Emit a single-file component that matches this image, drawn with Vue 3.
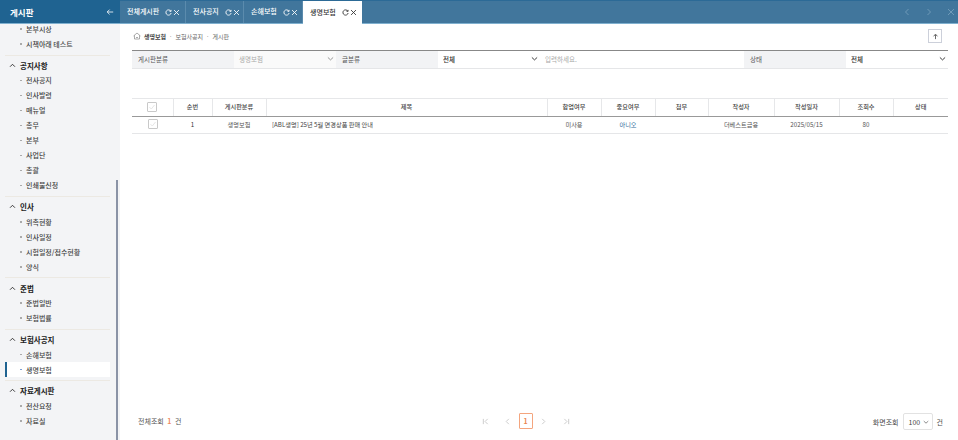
<script setup>
const menuGroups = [
  { title: '', items: ['본부시상', '시책아래 테스트'] },
  { title: '공지사항', items: ['전사공지', '인사발령', '매뉴얼', '총무', '본부', '사업단', '총괄', '인쇄물신청'] },
  { title: '인사', items: ['위촉현황', '인사일정', '시험일정/접수현황', '양식'] },
  { title: '준법', items: ['준법일반', '보험법률'] },
  { title: '보험사공지', items: ['손해보험', '생명보험'] },
  { title: '자료게시판', items: ['전산요청', '자료실'] }
]

const tabs = [
  { name: '전체게시판', width: 66 },
  { name: '전사공지', width: 58 },
  { name: '손해보험', width: 59 },
  { name: '생명보험', width: 59, active: true }
]

const columns = [
  { label: '', width: 41 },
  { label: '순번', width: 39 },
  { label: '게시판분류', width: 54 },
  { label: '제목', width: 281 },
  { label: '합업여부', width: 54 },
  { label: '중요여부', width: 54 },
  { label: '첨부', width: 53 },
  { label: '작성자', width: 66 },
  { label: '작성일자', width: 65 },
  { label: '조회수', width: 54 },
  { label: '상태', width: 55 }
]
</script>

<template>
  <div class="page">
    <header class="topbar">
      <div class="brand">
        <span class="brand-title">게시판</span>
        <svg class="brand-arrow" viewBox="0 0 10 10">
          <path d="M9 5H1.5M4.5 2 1.5 5l3 3" />
        </svg>
      </div>
      <div class="tabs">
        <div v-for="tab in tabs" :key="tab.name" class="tab" :class="{ 'is-active': tab.active }"
          :style="{ width: tab.width + 'px' }">
          <span class="tab-name">{{ tab.name }}</span>
          <svg class="tab-icon" viewBox="0 0 8 8">
            <path d="M6.6 2.4A3 3 0 1 0 7 4.6M6.9 1v1.7H5.2" />
          </svg>
          <svg class="tab-icon" viewBox="0 0 8 8">
            <path d="M1.2 1.2l5.6 5.6M6.8 1.2 1.2 6.8" />
          </svg>
        </div>
      </div>
      <div class="tab-nav">
        <svg viewBox="0 0 8 8"><path d="M5.5 1 2.5 4l3 3" /></svg>
        <svg viewBox="0 0 8 8"><path d="M2.5 1l3 3-3 3" /></svg>
        <svg viewBox="0 0 8 8"><path d="M1 1l6 6M7 1 1 7" /></svg>
      </div>
    </header>

    <div class="body">
      <aside class="sidebar">
        <nav class="menu">
          <section v-for="group in menuGroups" :key="group.title" class="menu-group">
            <div v-if="group.title" class="menu-title">
              <svg viewBox="0 0 8 8"><path d="M1.2 5.4 4 2.6l2.8 2.8" /></svg>
              {{ group.title }}
            </div>
            <div v-for="item in group.items" :key="item" class="menu-item" :class="{ 'is-active': item === '생명보험' }">
              <span class="bullet"></span>{{ item }}
            </div>
          </section>
        </nav>
        <div class="scroll-thumb"></div>
      </aside>

      <main class="content">
        <div class="crumb-row">
          <div class="crumbs">
            <svg class="home" viewBox="0 0 8 8"><path d="M.5 4 4 1l3.500 3M1.500 3.300V7h5V3.300M3 5.500h2" /></svg>
            <strong>생명보험</strong>
            <span class="dot">·</span><span>보험사공지</span>
            <span class="dot">·</span><span>게시판</span>
          </div>
          <button class="up-btn">
            <svg viewBox="0 0 8 8"><path d="M4 7V2M1.800 3.800 4 1.300l2.200 2.500" /></svg>
          </button>
        </div>

        <div class="filter">
          <div class="f-label">게시판분류</div>
          <div class="f-field is-muted">생명보험
            <svg viewBox="0 0 8 8"><path d="M1 2.800 4 5.600l3-2.800" /></svg>
          </div>
          <div class="f-label">글분류</div>
          <div class="f-field">전체
            <svg class="dark" viewBox="0 0 8 8"><path d="M1 2.800 4 5.600l3-2.800" /></svg>
          </div>
          <div class="f-input">입력하세요.</div>
          <div class="f-label">상태</div>
          <div class="f-field">전체
            <svg class="dark" viewBox="0 0 8 8"><path d="M1 2.800 4 5.600l3-2.800" /></svg>
          </div>
        </div>

        <table class="grid">
          <colgroup>
            <col v-for="col in columns" :key="col.label" :style="{ width: col.width + 'px' }">
          </colgroup>
          <thead>
            <tr>
              <th v-for="col in columns" :key="col.label">
                <span v-if="!col.label" class="check">
                  <svg viewBox="0 0 8 8"><path d="M1.500 4.200 3.300 6l3.200-4" /></svg>
                </span>
                {{ col.label }}
              </th>
            </tr>
          </thead>
          <tbody>
            <tr>
              <td>
                <span class="check">
                  <svg viewBox="0 0 8 8"><path d="M1.500 4.200 3.300 6l3.200-4" /></svg>
                </span>
              </td>
              <td class="dark-text">1</td>
              <td>생명보험</td>
              <td class="subject">[ABL생명] 25년 5월 면경상품 판매 안내</td>
              <td>미사용</td>
              <td class="blue">아니오</td>
              <td></td>
              <td>더베스트금융</td>
              <td>2025/05/15</td>
              <td>80</td>
              <td></td>
            </tr>
          </tbody>
        </table>

        <footer class="footer">
          <div class="total">전체조회<b>1</b>건</div>
          <div class="pager">
            <svg viewBox="0 0 8 8"><path d="M1.500 1v6M6.500 1 3.500 4l3 3" /></svg>
            <svg class="gap-lg" viewBox="0 0 8 8"><path d="M5.500 1 2.500 4l3 3" /></svg>
            <span class="page-num">1</span>
            <svg viewBox="0 0 8 8"><path d="M2.500 1l3 3-3 3" /></svg>
            <svg class="gap-lg" viewBox="0 0 8 8"><path d="M1.500 1l3 3-3 3M6.500 1v6" /></svg>
          </div>
          <div class="page-size">
            <span>화면조회</span>
            <div class="size-select">100
              <svg viewBox="0 0 8 8"><path d="M1 2.800 4 5.600l3-2.800" /></svg>
            </div>
            <span>건</span>
          </div>
        </footer>
      </main>
    </div>
  </div>
</template>

<style scoped>
.page {
  width: 958px;
  height: 440px;
  display: flex;
  flex-direction: column;
  overflow: hidden;
  background: #fff;
  color: #4a4a4a;
  font-family: "Noto Sans CJK KR", "Noto Sans", sans-serif;
  font-size: 7px;
}

svg {
  fill: none;
  stroke: currentColor;
  stroke-width: 1;
  flex: none;
}

.topbar {
  height: 24px;
  display: flex;
  flex: none;
  background: #41769c;
  border-top: 1px solid #2c6a96;
  border-bottom: 1px solid #7fb0cf;
  box-sizing: border-box;
}

.brand {
  width: 120px;
  margin: -1px 0;
  padding: 0 6px 0 10px;
  box-sizing: border-box;
  display: flex;
  align-items: center;
  justify-content: space-between;
  background: #1f6391;
  border-bottom: 1px solid #7fb0cf;
  color: #fff;
}

.brand-title {
  font-size: 8.500px;
  font-weight: 700;
}

.brand-arrow {
  width: 8px;
  height: 8px;
}

.tabs {
  display: flex;
  flex: 1;
}

.tab {
  display: flex;
  align-items: center;
  box-sizing: border-box;
  padding-left: 7px;
  color: #fff;
  font-weight: 500;
  border-right: 1px solid #5b8bad;
}

.tab.is-active {
  background: #fff;
  color: #333;
  margin-bottom: -1px;
  border-right: 0;
}

.tab-name {
  margin-right: 6px;
  margin-bottom: 2px;
  white-space: nowrap;
}

.tab-icon {
  width: 7px;
  height: 7px;
  margin-right: 1px;
}

.tab-nav {
  display: flex;
  align-items: center;
  gap: 14px;
  padding-right: 3px;
  color: #6f9ab8;
}

.tab-nav svg {
  width: 8px;
  height: 8px;
}

.body {
  flex: 1;
  display: flex;
  min-height: 0;
}

.sidebar {
  width: 120px;
  flex: none;
  position: relative;
  overflow: hidden;
  background: #f3f4f6;
}

.menu {
  margin-top: -2.500px;
  padding: 0 10px 0 5px;
}

.menu-group {
  padding-bottom: 3px;
  margin-bottom: 2.400px;
  border-bottom: 1px solid #ece9e3;
}

.menu-group:last-child {
  border-bottom: 0;
}

.menu-title {
  height: 15px;
  display: flex;
  align-items: center;
  gap: 4px;
  padding-left: 4px;
  font-size: 7.500px;
  font-weight: 700;
  color: #222;
}

.menu-title svg {
  width: 7px;
  height: 7px;
}

.menu-item {
  height: 15px;
  display: flex;
  align-items: center;
  padding-left: 15px;
  color: #444;
  font-weight: 500;
  white-space: nowrap;
}

.menu-item.is-active {
  padding-left: 13px;
  background: #fff;
  border-left: 2px solid #1f6391;
}

.bullet {
  width: 2px;
  height: 1.500px;
  margin-right: 4px;
  background: #aaa;
}

.is-active .bullet {
  background: #7a9fd6;
}

.scroll-thumb {
  position: absolute;
  left: 116px;
  top: 156px;
  bottom: 0;
  width: 2px;
  background: #8a93a6;
}

.content {
  flex: 1;
  min-width: 0;
  display: flex;
  flex-direction: column;
  padding: 0 10px 0 12px;
}

.crumb-row {
  height: 26px;
  display: flex;
  align-items: center;
  justify-content: space-between;
  padding: 0 6px 0 1px;
}

.crumbs {
  display: flex;
  align-items: center;
  gap: 2px;
  margin-bottom: 2px;
  color: #666;
  font-size: 6px;
}

.crumbs strong {
  margin-left: 1px;
  color: #444;
  font-size: 6px;
  font-weight: 700;
}

.dot {
  margin: 0 1px;
}

.home {
  width: 8px;
  height: 8px;
  color: #888;
  stroke-width: .7;
}

.up-btn {
  width: 14px;
  height: 14px;
  margin-bottom: 2px;
  padding: 0;
  display: flex;
  align-items: center;
  justify-content: center;
  background: #fff;
  border: 1px solid #ccd0da;
  color: #555;
}

.up-btn svg {
  width: 7px;
  height: 7px;
}

.filter {
  display: grid;
  grid-template-columns: 102px 102px 102px 102px 204px 102px 102px;
  height: 19px;
  box-sizing: border-box;
  border-top: 1px solid #888;
  border-bottom: 1px solid #e5e6e8;
  font-size: 6.500px;
}

.filter > div {
  padding-bottom: 2px;
}

.f-label {
  display: flex;
  align-items: center;
  padding-left: 6px;
  background: #f2f3f5;
  color: #555;
}

.f-field {
  display: flex;
  align-items: center;
  justify-content: space-between;
  padding: 0 2px 0 5px;
  color: #333;
  font-weight: 500;
}

.f-field.is-muted {
  color: #aaa;
  font-weight: 400;
  padding-left: 5px;
  background: #fafafa;
}

.f-field svg {
  width: 7px;
  height: 7px;
  color: #888;
}

.f-field svg.dark {
  color: #222;
}

.f-input {
  display: flex;
  align-items: center;
  padding-left: 5px;
  color: #aaa;
}

.grid {
  width: 816px;
  margin-top: 29px;
  table-layout: fixed;
  border-collapse: collapse;
  border-top: 1px solid #e6e7e9;
  font-size: 6.200px;
}

.grid th {
  box-sizing: border-box;
  height: 18px;
  padding: 0 0 2px;
  border-bottom: 1px solid #999;
  border-left: 1px solid #e6e7e9;
  font-weight: 500;
  color: #444;
  text-align: center;
}

.grid th:first-child {
  border-left: 0;
}

.grid td {
  box-sizing: border-box;
  height: 17px;
  padding: 0 0 2px;
  border-bottom: 1px solid #e5e6e8;
  color: #555;
  text-align: center;
}

.grid td.subject {
  padding-left: 6px;
  text-align: left;
  color: #444;
}

.grid td.blue {
  color: #2f6c99;
}

.grid td.dark-text {
  color: #333;
}

.check {
  display: inline-flex;
  width: 10px;
  height: 10px;
  box-sizing: border-box;
  vertical-align: middle;
  background: #fff;
  border: 1px solid #c9c9c9;
  border-radius: 1px;
  color: #e6e6e6;
}

.check svg {
  width: 8px;
  height: 8px;
}

.footer {
  margin-top: auto;
  height: 27px;
  display: grid;
  grid-template-columns: 343.500px auto 1fr;
  align-items: start;
  padding-left: 6px;
}

.total {
  display: flex;
  gap: 3.500px;
  height: 16px;
  align-items: center;
  color: #555;
}

.total b {
  color: #f08a5d;
  font-weight: 700;
}

.pager {
  display: flex;
  align-items: center;
  gap: 7.500px;
  height: 16px;
  color: #c6c6c6;
}

.pager svg {
  width: 7px;
  height: 7px;
}

.pager .gap-lg {
  margin-left: 8px;
}

.page-num {
  width: 14px;
  height: 16px;
  box-sizing: border-box;
  display: flex;
  align-items: center;
  justify-content: center;
  border: 1px solid #f4a57e;
  border-radius: 1px;
  color: #ea8450;
  font-weight: 700;
}

.page-size {
  display: flex;
  align-items: center;
  justify-content: flex-end;
  gap: 4px;
  height: 17px;
  padding-right: 5px;
}

.size-select {
  width: 30px;
  height: 17px;
  box-sizing: border-box;
  display: flex;
  align-items: center;
  justify-content: space-between;
  padding: 0 3px 0 5px;
  border: 1px solid #e2e2e2;
  border-radius: 2px;
  color: #444;
}

.size-select svg {
  width: 6px;
  height: 6px;
  color: #666;
}
</style>
